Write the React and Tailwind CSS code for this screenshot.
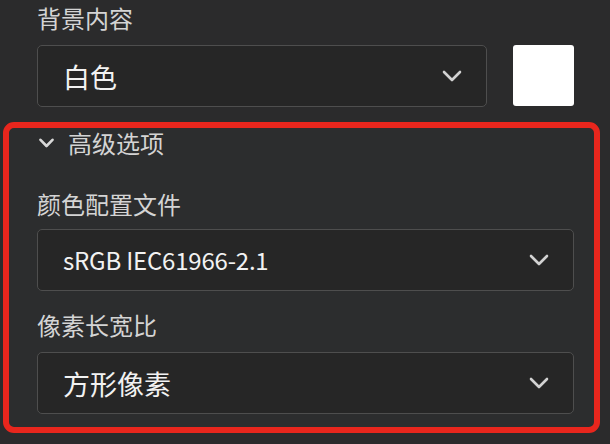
const Chevron = ({ className = "" }) => (
  <svg width="20" height="12" viewBox="0 0 20 12" className={className}>
    <polyline
      points="2,2 10,10 18,2"
      fill="none"
      stroke="#d2d2d2"
      strokeWidth="2.6"
      strokeLinecap="round"
      strokeLinejoin="round"
    />
  </svg>
);

const Select = ({ value, className = "", textClass = "text-[27px]" }) => (
  <div
    className={`h-[62px] flex items-center justify-between pl-[25px] pr-[24px] bg-[#262626] border border-[#4e4e4e] rounded-[5px] ${className}`}
  >
    <span className={`${textClass} text-[#f2f2f2] leading-none`}>{value}</span>
    <Chevron />
  </div>
);

const App = () => {
  return (
    <div className="w-[610px] h-[444px] overflow-hidden bg-[#2b2b2c] font-['Noto_Sans_CJK_SC','Noto_Sans',sans-serif]">
      <div className="h-[36px] flex items-center pl-[37px] text-[24px] text-[#d4d4d4]">背景内容</div>
      <div className="mt-[9px] flex items-start pl-[37px]">
        <Select value="白色" className="w-[450px]" />
        <div className="ml-[26px] w-[61px] h-[61px] bg-white rounded-[3px]" />
      </div>
      <div className="mt-[15px] ml-[3px] w-[597px] h-[311px] border-[6px] border-[#e8261d] rounded-[11px] bg-[#2c2d2e] pl-[28px] pr-[20px]">
        <div className="h-[30px] flex items-center">
          <svg width="15" height="10" viewBox="0 0 15 10" className="ml-[2px]">
            <polyline
              points="1.5,1.8 7.5,8 13.5,1.8"
              fill="none"
              stroke="#d8d8d8"
              strokeWidth="2.6"
              strokeLinecap="round"
              strokeLinejoin="round"
            />
          </svg>
          <span className="ml-[14px] text-[24px] text-[#d4d4d4]">高级选项</span>
        </div>
        <div className="mt-[31px] h-[30px] flex items-center text-[24px] text-[#d4d4d4]">颜色配置文件</div>
        <Select value="sRGB IEC61966-2.1" className="mt-[10px]" textClass="text-[24px] tracking-[-0.2px]" />
        <div className="mt-[19px] h-[30px] flex items-center text-[24px] text-[#d4d4d4]">像素长宽比</div>
        <Select value="方形像素" className="mt-[12px] h-[61px]" />
      </div>
    </div>
  );
};

export default App;
